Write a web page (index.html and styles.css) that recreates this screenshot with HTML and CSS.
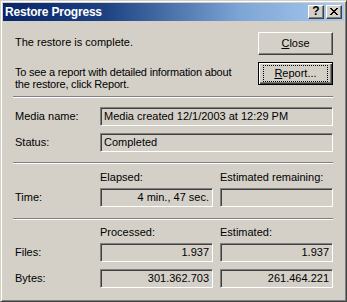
FILE: index.html
```html
<!DOCTYPE html>
<html>
<head>
<meta charset="utf-8">
<link rel="stylesheet" href="styles.css">
</head>
<body>
<div class="window">
  <div class="titlebar">
    <span class="title">Restore Progress</span>
    <div class="caption-buttons">
      <span class="cap-btn help">?</span>
      <span class="cap-btn close-x">
        <svg width="8" height="7" viewBox="0 0 8 7" shape-rendering="crispEdges"><path d="M0 0h2v1h-2zM6 0h2v1h-2zM1 1h2v1h-2zM5 1h2v1h-2zM2 2h4v1h-4zM3 3h2v1h-2zM2 4h4v1h-4zM1 5h2v1h-2zM5 5h2v1h-2zM0 6h2v1h-2zM6 6h2v1h-2z" fill="#000"/></svg>
      </span>
    </div>
  </div>
  <div class="content">
    <div class="top">
      <div class="messages">
        <p class="msg1">The restore is complete.</p>
        <p class="msg2">To see a report with detailed information about<br>the restore, click Report.</p>
      </div>
      <div class="buttons">
        <button class="btn"><span class="btn-label"><u>C</u>lose</span></button>
        <button class="btn default"><span class="btn-label focus"><u>R</u>eport...</span></button>
      </div>
    </div>
    <div class="sep sep1"></div>
    <div class="grid info">
      <span class="label">Media name:</span>
      <span class="field wide">Media created 12/1/2003 at 12:29 PM</span>
      <span class="label">Status:</span>
      <span class="field wide">Completed</span>
    </div>
    <div class="sep sep2"></div>
    <div class="grid time">
      <span class="head"></span>
      <span class="head">Elapsed:</span>
      <span class="head">Estimated remaining:</span>
      <span class="label">Time:</span>
      <span class="field num">4 min., 47 sec.</span>
      <span class="field num"></span>
    </div>
    <div class="sep sep3"></div>
    <div class="grid counts">
      <span class="head"></span>
      <span class="head">Processed:</span>
      <span class="head">Estimated:</span>
      <span class="label">Files:</span>
      <span class="field num">1.937</span>
      <span class="field num">1.937</span>
      <span class="label">Bytes:</span>
      <span class="field num">301.362.703</span>
      <span class="field num">261.464.221</span>
    </div>
  </div>
</div>
</body>
</html>
```

FILE: styles.css
```css
* { box-sizing: border-box; }
html, body { margin: 0; padding: 0; background: #d4d0c8; }
body {
  font-family: "Liberation Sans", Arial, sans-serif;
  font-size: 11px;
  line-height: 13px;
  color: #000;
}
.window {
  width: 347px;
  height: 302px;
  background: #d4d0c8;
  border: 1px solid;
  border-color: #d4d0c8 #404040 #404040 #d4d0c8;
  box-shadow: inset 1px 1px #ffffff, inset -1px -1px #808080;
  padding: 2px;
}
.titlebar {
  height: 18px;
  background: linear-gradient(to right, #0a246a 0%, #1d4282 30%, #7ea6d6 70%, #a6caf0 100%);
  display: flex;
  align-items: center;
  justify-content: space-between;
  padding-left: 2px;
}
.title {
  color: #fff;
  font-weight: bold;
  font-size: 12px;
  letter-spacing: -0.2px;
  line-height: 14px;
}
.caption-buttons {
  display: flex;
  gap: 2px;
  margin-right: 2px;
}
.cap-btn {
  width: 16px;
  height: 14px;
  background: #d4d0c8;
  border: 1px solid;
  border-color: #ffffff #404040 #404040 #ffffff;
  box-shadow: inset -1px -1px #808080;
  display: flex;
  align-items: center;
  justify-content: center;
}
.help {
  font-weight: bold;
  font-size: 12px;
  line-height: 11px;
  padding-bottom: 1px;
}
.close-x svg { display: block; margin-top: -1px; }
.content {
  padding: 0 11px 0 12px;
}
.top {
  display: grid;
  grid-template-columns: 1fr 75px;
  padding-top: 11px;
}
.messages p { margin: 0; }
.messages .msg1 { margin-top: 4px; }
.messages .msg2 { margin-top: 17px; line-height: 12px; letter-spacing: -0.2px; }
.buttons {
  display: flex;
  flex-direction: column;
  gap: 7px;
}
.btn {
  width: 75px;
  height: 23px;
  padding: 0;
  margin: 0;
  font: inherit;
  color: #000;
  background: #d4d0c8;
  border: 1px solid;
  border-color: #ffffff #404040 #404040 #ffffff;
  box-shadow: inset -1px -1px #808080;
  display: flex;
  align-items: center;
  justify-content: center;
}
.btn.default {
  border: 1px solid #000;
  box-shadow: inset 1px 1px #ffffff, inset -1px -1px #404040, inset -2px -2px #808080;
}
.btn-label {
  display: flex;
  align-items: center;
  justify-content: center;
  font-size: 11px;
}
.btn-label.focus {
  width: 63px;
  height: 15px;
  outline: 1px dotted #000;
}
.btn-label u { text-decoration: underline; text-underline-offset: 1px; }
.sep {
  height: 2px;
  border-top: 1px solid #808080;
  border-bottom: 1px solid #ffffff;
  margin-left: -2px;
}
.sep1 { margin-top: 6px; }
.sep2 { margin-top: 10px; }
.sep3 { margin-top: 11px; }
.grid {
  display: grid;
  grid-template-columns: 78px 1fr 1fr;
  column-gap: 7px;
  row-gap: 7px;
  align-items: center;
}
.info { margin-top: 9px; }
.time { margin-top: 7px; }
.counts { margin-top: 6px; }
.head { line-height: 13px; margin-bottom: -3px; }
.label { line-height: 13px; }
.field {
  height: 19px;
  border: 1px solid;
  border-color: #808080 #ffffff #ffffff #808080;
  box-shadow: inset 1px 1px #404040, inset -1px -1px #d4d0c8;
  padding: 2px 3px 0 3px;
  line-height: 13px;
  white-space: nowrap;
  overflow: hidden;
}
.field.wide { grid-column: 2 / 4; }
.field.num { text-align: right; }
```
